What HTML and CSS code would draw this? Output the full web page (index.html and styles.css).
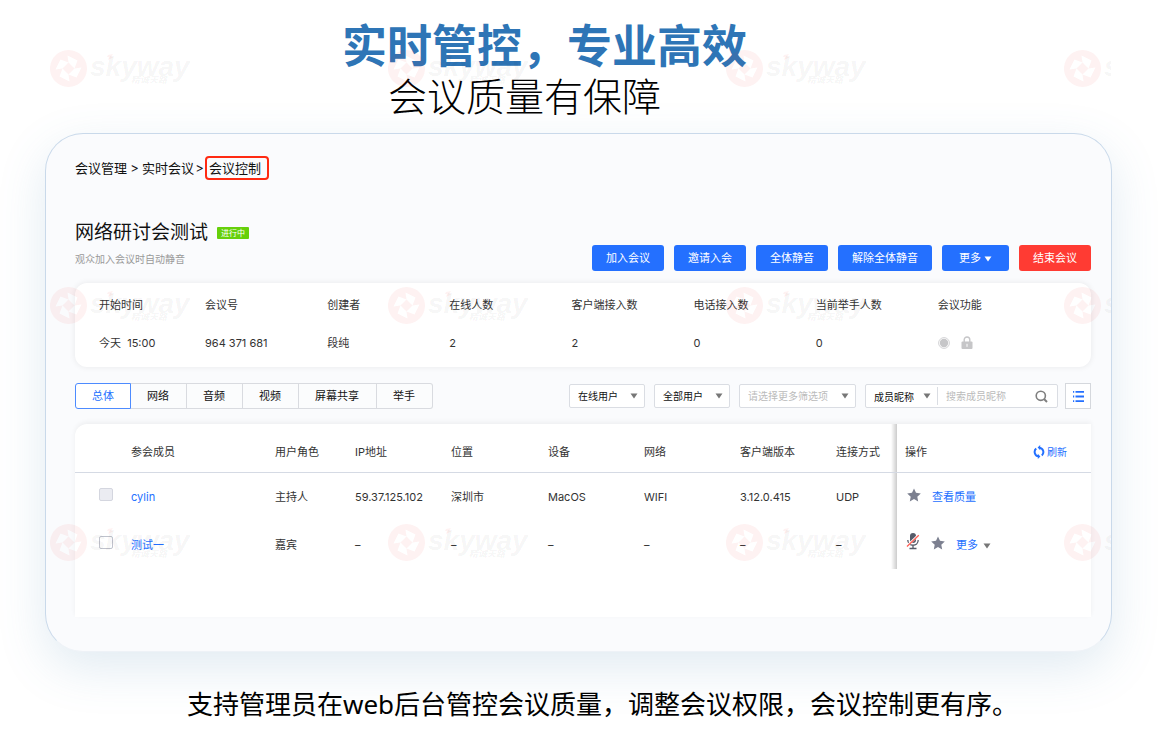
FILE: index.html
```html
<!DOCTYPE html>
<html lang="zh-CN">
<head>
<meta charset="utf-8">
<meta name="viewport" content="width=device-width, initial-scale=1">
<title>会议控制</title>
<link rel="stylesheet" href="styles.css">
</head>
<body>
<svg class="defs" aria-hidden="true">
  <symbol id="star" viewBox="0 0 14 14"><path d="M7 .4l2 4.4 4.800.6-3.500 3.300.9 4.800L7 11.100l-4.200 2.400.9-4.800L.2 5.400 5 4.800z"/></symbol>
  <symbol id="caret" viewBox="0 0 8 6"><path d="M.5.500h7L4 5.500z"/></symbol>
  <symbol id="mark" viewBox="0 0 140 40">
    <g transform="translate(18.500 18.500)"><path class="mark-red" fill-rule="evenodd" d="M0-18.500a18.500 18.500 0 1 0 .01 0zM0-6L-6 0-13 1-8-9zM6 0L0-6-1-13 9-8zM0 6L6 0 13-1 8 9zM-6 0L0 6 1 13-9 8z"/></g>
    <path class="mark-red" d="M58 5l5-1-2 3 3 0-6 3 1-3-2 0z"/>
    <text class="mark-name" x="40" y="26">skyway</text>
    <text class="mark-sub" x="81" y="33">精诚天路</text>
  </symbol>
</svg>

<header class="hero">
  <h1 class="hero-title">实时管控，专业高效</h1>
  <p class="hero-sub">会议质量有保障</p>
</header>

<main class="card">
  <nav class="crumbs" aria-label="位置">
    <a href="#">会议管理</a><span>&gt;</span><a href="#">实时会议</a><span>&gt;</span><a class="crumb-current" href="#">会议控制</a>
  </nav>

  <div class="head">
    <div>
      <div class="title-row"><h2 class="title">网络研讨会测试</h2><span class="badge">进行中</span></div>
      <p class="note">观众加入会议时自动静音</p>
    </div>
    <div class="actions">
      <button class="btn" type="button">加入会议</button>
      <button class="btn" type="button">邀请入会</button>
      <button class="btn" type="button">全体静音</button>
      <button class="btn" type="button">解除全体静音</button>
      <button class="btn btn-more" type="button">更多<svg class="caret" aria-hidden="true"><use href="#caret"/></svg></button>
      <button class="btn btn-danger" type="button">结束会议</button>
    </div>
  </div>

  <dl class="meta">
    <div><dt>开始时间</dt><dd>今天&nbsp; 15:00</dd></div>
    <div><dt>会议号</dt><dd>964 371 681</dd></div>
    <div><dt>创建者</dt><dd>段纯</dd></div>
    <div><dt>在线人数</dt><dd>2</dd></div>
    <div><dt>客户端接入数</dt><dd>2</dd></div>
    <div><dt>电话接入数</dt><dd>0</dd></div>
    <div><dt>当前举手人数</dt><dd>0</dd></div>
    <div><dt>会议功能</dt><dd class="features">
      <svg width="12" height="12" viewBox="0 0 12 12" aria-hidden="true"><circle cx="6" cy="6" r="5.400" fill="none" stroke="#d3d3d5"/><circle cx="6" cy="6" r="4.200" fill="#c6c6c8"/></svg>
      <svg width="12" height="14" viewBox="0 0 12 14" aria-hidden="true"><path d="M3.200 6V3.800a2.800 2.800 0 0 1 5.600 0V6" fill="none" stroke="#c6c6c8" stroke-width="1.400"/><rect x=".5" y="5.500" width="11" height="7.500" rx="1" fill="#c6c6c8"/><path d="M6 7.800v3" stroke="#fff"/></svg>
    </dd></div>
  </dl>

  <div class="toolbar">
    <div class="tabs">
      <button class="tab tab-on" type="button">总体</button><button class="tab" type="button">网络</button><button class="tab" type="button">音频</button><button class="tab" type="button">视频</button><button class="tab" type="button">屏幕共享</button><button class="tab" type="button">举手</button>
    </div>
    <div class="filters">
      <div class="pick"><select aria-label="在线状态"><option>在线用户</option></select><svg class="caret" aria-hidden="true"><use href="#caret"/></svg></div>
      <div class="pick"><select aria-label="用户范围"><option>全部用户</option></select><svg class="caret" aria-hidden="true"><use href="#caret"/></svg></div>
      <div class="pick pick-wide"><select aria-label="更多筛选项"><option>请选择更多筛选项</option></select><svg class="caret" aria-hidden="true"><use href="#caret"/></svg></div>
      <div class="search">
        <div class="pick pick-inner"><select aria-label="搜索字段"><option>成员昵称</option></select><svg class="caret" aria-hidden="true"><use href="#caret"/></svg></div>
        <input type="text" aria-label="搜索成员昵称" placeholder="搜索成员昵称">
        <button class="search-btn" type="button" aria-label="搜索"><svg width="13" height="13" viewBox="0 0 13 13" fill="none" stroke="#7f7f7f" stroke-width="1.600" aria-hidden="true"><circle cx="5.800" cy="5.800" r="4.600"/><path d="M9 9l3 3" stroke-width="2"/></svg></button>
      </div>
      <button class="list-btn" type="button" aria-label="列表设置"><svg width="13" height="13" viewBox="0 0 13 13" fill="#2470ff" aria-hidden="true"><path d="M3.500 1H12v1.800H3.500zM3.500 5.600H12v1.800H3.500zM3.500 10.200H12V12H3.500zM1 1h1.200v1.800H1zM1 5.600h1.200v1.800H1zM1 10.200h1.200V12H1z"/></svg></button>
    </div>
  </div>

  <div class="list">
    <table class="members">
      <colgroup><col class="c-check"><col class="c-name"><col class="c-role"><col class="c-std"><col class="c-place"><col class="c-std"><col class="c-std"><col class="c-std"><col class="c-link"><col></colgroup>
      <thead>
        <tr><th></th><th>参会成员</th><th>用户角色</th><th>IP地址</th><th>位置</th><th>设备</th><th>网络</th><th>客户端版本</th><th class="edge">连接方式</th>
          <th class="op"><div class="op-head">操作<button class="refresh" type="button"><svg width="12" height="14" viewBox="0 0 12 14" aria-hidden="true"><g fill="none" stroke="#2470ff" stroke-width="2"><path d="M6.500 2.700A4.400 4.400 0 0 1 8.800 10.400"/><path d="M5.500 11.300A4.400 4.400 0 0 1 3.200 3.600"/></g><path d="M7.200 0v5.200L4.600 2.600zM4.800 8.800V14l2.600-2.600z" fill="#2470ff"/></svg>刷新</button></div></th></tr>
      </thead>
      <tbody>
        <tr><td class="check"><input type="checkbox" aria-label="cylin" disabled></td><td><a href="#">cylin</a></td><td>主持人</td><td>59.37.125.102</td><td>深圳市</td><td>MacOS</td><td>WIFI</td><td>3.12.0.415</td><td class="edge">UDP</td>
          <td class="op"><div class="ops"><svg class="star" aria-hidden="true"><use href="#star"/></svg><a href="#">查看质量</a></div></td></tr>
        <tr><td class="check"><input type="checkbox" aria-label="测试一"></td><td><a href="#">测试一</a></td><td>嘉宾</td><td>–</td><td>–</td><td>–</td><td>–</td><td>–</td><td class="edge">–</td>
          <td class="op"><div class="ops"><svg class="mic" width="14" height="18" viewBox="0 0 14 18" aria-hidden="true"><rect x="4" y="1" width="6" height="10" rx="3" fill="#565b69"/><path d="M1.800 8c0 7 10.400 7 10.400 0M7 13.500v3M3.500 16.500h7" fill="none" stroke="#565b69" stroke-width="1.300"/><path d="M1 14L12.500 3" stroke="#fff" stroke-width="2.400"/><path d="M1 14.500L12.800 3.200" stroke="#ff5a50" stroke-width="1.200"/></svg><svg class="star" aria-hidden="true"><use href="#star"/></svg><a class="more" href="#">更多<svg class="caret" aria-hidden="true"><use href="#caret"/></svg></a></div></td></tr>
      </tbody>
    </table>
  </div>
</main>

<p class="caption">支持管理员在web后台管控会议质量，调整会议权限，会议控制更有序。</p>

<div class="marks" aria-hidden="true">
  <svg><use href="#mark"/></svg><svg><use href="#mark"/></svg><svg><use href="#mark"/></svg><svg><use href="#mark"/></svg>
  <svg><use href="#mark"/></svg><svg><use href="#mark"/></svg><svg><use href="#mark"/></svg><svg><use href="#mark"/></svg>
  <svg><use href="#mark"/></svg><svg><use href="#mark"/></svg><svg><use href="#mark"/></svg><svg><use href="#mark"/></svg>
</div>
</body>
</html>
```
FILE: styles.css
```css
* { box-sizing: border-box; }

body {
  position: relative;
  margin: 0;
  overflow-x: hidden;
  background: #fff;
  color: #333;
  font: 11px/20px Inter, "Noto Sans CJK SC", sans-serif;
}

h1, h2, p, dl, dd { margin: 0; }
a { color: #2470ff; text-decoration: none; }
button, select, input { font: inherit; color: inherit; }
button { cursor: pointer; }
.defs { display: none; }

.hero {
  height: 133px;
  padding: 14px 72px 0 0;
  text-align: center;
}
.hero-title {
  color: #2e75b6;
  font: 700 45px/60px "Noto Sans CJK SC", sans-serif;
}
.hero-sub {
  padding-right: 40px;
  color: #000;
  font: 300 39px/40px "Noto Sans CJK SC", sans-serif;
}

.card {
  margin: 0 49px 0 45px;
  padding: 22px 20px 34px 29px;
  border: 1px solid #c9d9ea;
  border-bottom-color: #eef2f7;
  border-radius: 38px;
  background: #fafbfd;
  box-shadow: 0 16px 48px rgba(80, 135, 180, 0.17);
}

.crumbs {
  display: flex;
  align-items: center;
  height: 24px;
  font-size: 13px;
}
.crumbs a { color: #111; }
.crumbs span { width: 15px; text-align: center; color: #111; }
.crumbs span:last-of-type { width: 11px; }
.crumbs .crumb-current {
  padding: 0 6px 0 2px;
  border: 2px solid #ff2a12;
  border-radius: 4px;
}

.head {
  display: flex;
  align-items: flex-end;
  justify-content: space-between;
  margin-top: 38px;
}
.title-row { display: flex; align-items: center; gap: 9px; height: 29px; }
.title { color: #111; font-size: 19px; font-weight: 400; }
.badge {
  padding: 0 4px;
  border-radius: 1px;
  background: #66d00b;
  color: #fff;
  font-size: 8px;
  line-height: 12px;
}
.note { color: #999; font-size: 10px; line-height: 24px; }

.actions { display: flex; gap: 10px; }
.btn {
  height: 26px;
  padding: 0 14px;
  border: 0;
  border-radius: 3px;
  background: #2470ff;
  color: #fff;
}
.btn-more { padding: 0 17px; }
.btn-danger { background: #ff3b33; }
.caret { width: 8px; height: 6px; fill: currentColor; }
.btn-more .caret { margin-left: 3px; }

.meta {
  display: grid;
  grid-template-columns: 106px repeat(7, 1fr);
  margin-top: 12px;
  padding: 12px 31px 14px 24px;
  border-radius: 12px;
  background: #fff;
  box-shadow: 0 0 6px rgba(0, 0, 0, 0.08);
}
.meta dd { margin-top: 18px; }
.features { display: flex; align-items: center; gap: 11px; height: 20px; }

.toolbar {
  display: flex;
  align-items: center;
  justify-content: space-between;
  margin-top: 16px;
}
.tabs { display: flex; }
.tab {
  height: 26px;
  padding: 0 17px 0 16px;
  border: 1px solid #d9dbe0;
  border-left: 0;
  background: #fbfcfd;
  color: #111;
}
.tab:last-child { border-radius: 0 3px 3px 0; }
.tab-on {
  padding: 0 16px;
  border: 1px solid #4d8bff;
  border-radius: 3px 0 0 3px;
  background: #fff;
  color: #2470ff;
}

.filters { display: flex; gap: 9px; align-items: center; font-size: 10px; }
.pick {
  display: grid;
  align-items: center;
  width: 76px;
  height: 24px;
  border: 1px solid #dadde3;
  border-radius: 2px;
  background: #fff;
  color: #111;
}
.pick select, .pick .caret { grid-area: 1 / 1; }
.pick select {
  width: 100%;
  height: 22px;
  padding: 0 0 0 8px;
  border: 0;
  background: none;
  appearance: none;
}
.pick .caret { justify-self: end; margin-right: 6px; fill: #777; pointer-events: none; }
.pick-wide { width: 117px; }
.pick-wide select { color: #bbb; }
.pick-inner { width: 72px; height: 18px; border: 0; border-right: 1px solid #dadde3; border-radius: 0; }
.pick-inner select { height: 18px; }
.search {
  display: flex;
  align-items: center;
  width: 193px;
  height: 24px;
  border: 1px solid #dadde3;
  border-radius: 2px;
  background: #fff;
}
.search input { flex: 1; min-width: 0; padding: 0 8px; border: 0; background: none; }
.search input::placeholder { color: #bbb; }
.search-btn { display: flex; padding: 0 9px 0 0; border: 0; background: none; }
.list-btn {
  display: grid;
  place-items: center;
  width: 26px;
  height: 26px;
  margin-left: -2px;
  padding: 0;
  border: 1px solid #d5d8dd;
  background: #fff;
}

.list {
  min-height: 193px;
  margin-top: 15px;
  border-radius: 12px 0 0 0;
  background: #fff;
  box-shadow: 0 -2px 5px rgba(0, 0, 0, 0.05);
}
.members { width: 100%; border-collapse: separate; border-spacing: 0; table-layout: fixed; }
.c-check { width: 56px; }
.c-name { width: 144px; }
.c-role { width: 80px; }
.c-std { width: 96px; }
.c-place { width: 97px; }
.c-link { width: 61px; }
.members th, .members td { height: 48px; padding: 0; text-align: left; white-space: nowrap; }
.members th { height: 49px; padding-top: 8px; border-bottom: 1px solid #d5dae4; font-weight: 400; }
.members .check { padding-left: 24px; }
.check input {
  display: block;
  width: 14px;
  height: 13px;
  margin: 0 0 6px;
  border: 1px solid #bfc2cc;
  border-radius: 2px;
  background: #fff;
  appearance: none;
}
.check input:disabled { border-color: #d4d6df; background: #ebecf2; }
.check input:checked { background: #2470ff; }
.members .edge { background: linear-gradient(to left, rgba(0, 0, 0, 0.2), rgba(0, 0, 0, 0) 6px); }
.members .op { padding-left: 8px; }
.op-head { display: flex; justify-content: space-between; padding-right: 24px; }
.refresh {
  display: flex;
  align-items: center;
  gap: 2px;
  padding: 0;
  border: 0;
  background: none;
  color: #2470ff;
  font-size: 10px;
}
.ops { display: flex; align-items: center; gap: 11px; }
.star { width: 14px; height: 14px; margin: 0 0 4px 2px; fill: #7c8090; }
.mic { margin: 0 -2px 8px 1px; }
.more .caret { margin-left: 5px; fill: #777; }

.caption {
  padding: 34px 0 14px 187px;
  color: #000;
  font: 26px/36px "Noto Sans", "Noto Sans CJK SC", sans-serif;
}

/* Brand marks repeat over the whole page */
.marks {
  position: absolute;
  inset: 0 50px 0 0;
  display: grid;
  grid-template-columns: repeat(4, 338px);
  grid-auto-rows: 237px;
  padding: 50px 0 0 50px;
  overflow: hidden;
  pointer-events: none;
}
.marks svg { width: 140px; height: 40px; }
.mark-red { fill: #e22; fill-opacity: 0.06; }
.mark-name { fill: #000; fill-opacity: 0.05; font: italic 700 28px "Liberation Sans", sans-serif; }
.mark-sub { fill: #000; fill-opacity: 0.05; font: italic 700 9px "Noto Sans CJK SC", sans-serif; }
```
